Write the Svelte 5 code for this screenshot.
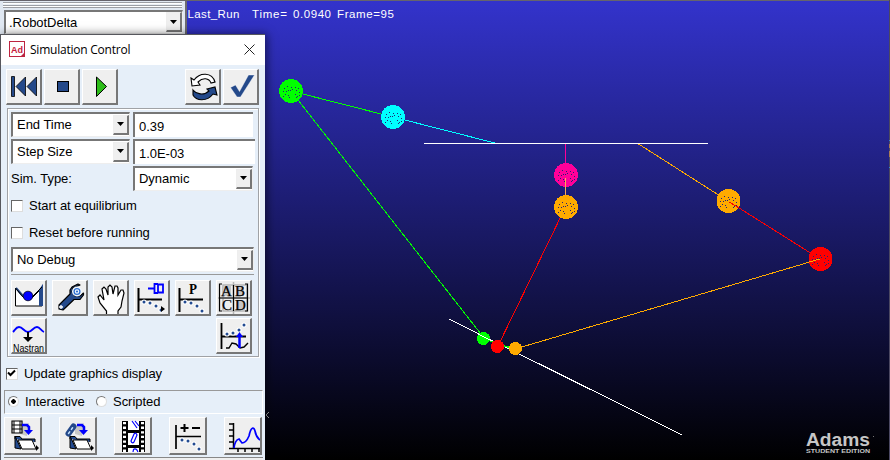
<script>
  const links = [
    ['#00ff00', 291, 91, 393, 117], ['#00ffff', 393, 117, 495, 143],
    ['#00ff00', 291, 91, 484, 338], ['#ff0099', 565.5, 143, 565.5, 175],
    ['#ffaa00', 637, 143, 728, 201], ['#ff0000', 565.5, 207, 498, 346],
    ['#ff0000', 728, 201, 820, 259], ['#ffaa00', 820, 259, 515, 349],
    ['#ffffff', 424, 143.5, 708, 143.5], ['#ffffff', 449, 319, 682, 435]
  ];
  const balls = [
    ['#00ff00', 291, 91], ['#00ffff', 393, 117], ['#ff0099', 566, 175],
    ['#ffaa00', 566, 207], ['#ffaa00', 728.5, 201], ['#ff0000', 820.5, 259]
  ];
  const specks = [[-7,-3],[-4,-5],[0,-4],[4,-4],[7,-3],[-8,0],[-5,0],[-3,-1],[-1,-1],[1,-2],[5,-1],[8,1],[-6,3],[-3,4],[4,3],[6,5],[8,4],[-8,5],[5,6],[-2,6]];
  const topTools = ['rewind', 'stop', 'play', 'gap', 'reset', 'check'];
  const midTools = ['equil', 'wrench', 'hand', 'linear', 'param', 'matrix'];
  const bottomTools = ['filmfolder', 'linkfolder', 'film', 'plusminus', 'plot'];
</script>

{#snippet axes(dots)}
  <path d="M4.500 8V32M4 19.500H28" stroke="#000" stroke-width="2" fill="none" />
  {#each dots as [x, y]}<circle cx={x} cy={y} r="2.600" fill="#fff" /><circle cx={x} cy={y} r="1.500" fill="#234b91" />{/each}
{/snippet}

{#snippet folder()}
  <path d="M10 21V18.500H15L17 21H30V24" fill="#234b91" stroke="#000" />
  <path d="M10 18V30L16 31Z" fill="#234b91" stroke="#000" />
  <path d="M13 22H27L31 31H17Z" fill="#fff" stroke="#000" />
  <path d="M31 27L34 30L31 33Z" fill="#000" />
{/snippet}

{#snippet icon(name)}
  <svg width="36" height="36" viewBox="0 0 36 36" aria-hidden="true">
    {#if name === 'rewind'}
      <path d="M4.500 7.500H7.500V27.500H4.500ZM18.500 8V27L9 17.500ZM29.500 8V27L20 17.500Z" fill="#24498a" stroke="#000" stroke-width=".8" />
    {:else if name === 'stop'}
      <rect x="12.500" y="12.500" width="11" height="10" fill="#24498a" stroke="#000" />
    {:else if name === 'play'}
      <path d="M13.500 8V27.500L23.500 17.500Z" fill="#2dbd19" stroke="#000" />
    {:else if name === 'reset'}
      <path d="M5 9L8 11C14 3 26 3 29 13L25 14C23 9 17 8 12 13L14 16L6 17Z" fill="#fff" stroke="#000" stroke-width="1.100" />
      <path d="M7 21C10 25 18 27 23 22L21 20L29 18L31 26L27 25C21 33 10 32 7 26Z" fill="#24498a" stroke="#000" stroke-width="1.100" />
    {:else if name === 'check'}
      <path d="M6.500 18.500L11.500 16L15.500 22.500L24.500 6H30.500L16.500 28H13Z" fill="#24498a" stroke="#fff" stroke-width=".4" />
    {:else if name === 'equil'}
      <path d="M4.500 8V26H31V8L22 17L17 20L12 17Z" fill="#fff" stroke="#000" />
      <path d="M5 8L12 16M29 10V26M29 10L31 7V26" stroke="#24498a" stroke-width="2" fill="none" />
      <path d="M4.500 8L12 17M31 7L21 17" stroke="#000" fill="none" />
      <circle cx="17" cy="16" r="4.800" fill="#0000ff" stroke="#000" stroke-width=".7" />
    {:else if name === 'wrench'}
      <path d="M18 14L7 25L7 29L11 30L22 19.500H28L31.500 15V13L28 16H23L20 12L21 8L28 5L26 4L20 7L18 10Z" fill="#24498a" stroke="#000" stroke-width="1.200" stroke-linejoin="round" />
      <circle cx="25" cy="11.500" r="5" fill="#eef7ff" /><circle cx="25" cy="11.500" r="2.900" fill="none" stroke="#2f6fd0" stroke-width="1.300" /><circle cx="25" cy="11.500" r="1.100" fill="#2f6fd0" />
      <path d="M9 25V29M7 27H11" stroke="#fff" stroke-width="1.300" />
    {:else if name === 'hand'}
      <path d="M13.500 34V31L7 23L5 17L7 15L11 20L9 9L11 7L13 9L15 15L15 7L17 5L19 7L20 14L22 6H24L25 8V15L28 10L30 10L31 13L29 21L28 27L25 31V34" fill="#fff" stroke="#000" stroke-width="1.200" />
    {:else if name === 'linear'}
      {@render axes([[10, 22], [16, 23], [22, 26], [27, 30]])}
      <path d="M14 8.500H20M24 4H20.500V13H24M24 4.500H29V12.500H24ZM24 4V13" fill="none" stroke="#0000ff" stroke-width="1.800" />
      <path d="M27 26L31 29L27 32Z" fill="#000" />
    {:else if name === 'param'}
      {@render axes([[10, 22], [16, 23], [22, 26], [27, 31]])}
      <text x="14" y="14" font-family="Liberation Serif, serif" font-size="14" font-weight="700" textLength="8" lengthAdjust="spacingAndGlyphs">P</text>
    {:else if name === 'matrix'}
      <path d="M7 5H31V31H7ZM17.500 2V34M2 18H34" fill="none" stroke="#b5b5b5" stroke-width="1.500" />
      <path d="M7 6H15V16H7ZM20 7H28V16H20ZM20 21H29V30H20Z" fill="#c6c6c6" />
      <path d="M6 4H3.500V31H6M29 4H31.500V31H29M17.500 5V31M4 18H31" fill="none" stroke="#000" stroke-width="1.200" />
      <g font-family="Liberation Serif, serif" font-size="15" stroke="#000" stroke-width=".25"><text x="5" y="15.500">A</text><text x="19" y="15.500">B</text><text x="6" y="30">C</text><text x="19" y="30">D</text></g>
    {:else if name === 'nastran'}
      <path d="M2 14C4 12 5 9 8 9C12 9 13 14 17 14C21 14 22 9 26 9C29 9 30 13 33 14" fill="none" stroke="#0000ff" stroke-width="1.800" />
      <path d="M17 14V20" stroke="#000" stroke-width="2" /><path d="M12 19H22L17 24Z" fill="#000" />
      <text x="2" y="34" font-family="Liberation Sans, sans-serif" font-size="10.500" textLength="31" lengthAdjust="spacingAndGlyphs">Nastran</text>
    {:else if name === 'deform'}
      <path d="M5.500 5V31M5 18.500H30" stroke="#000" stroke-width="1.800" />
      <path d="M10 30H13L16 25L20 26L24 30L28 29L32 25" fill="none" stroke="#000" stroke-width="1.400" />
      {#each [[11, 16], [17, 15], [23, 12], [28, 7]] as [x, y]}<circle cx={x} cy={y} r="2.600" fill="#fff" /><circle cx={x} cy={y} r="1.500" fill="#234b91" />{/each}
      <path d="M23.500 30V17" stroke="#0000ff" stroke-width="2.500" /><path d="M20 19L23.500 14L27 19Z" fill="#0000ff" />
    {:else if name === 'filmfolder'}
      <path d="M15 9L24 5L22 18L15 16Z" fill="#c7c7c7" />
      {@render folder()}
      <path d="M7 3H17V15H7Z" fill="#fff" stroke="#000" stroke-width="1.200" /><path d="M9 3V15M15 3V15M7 7H17M7 11H17" stroke="#000" />
      <path d="M17 7H22L24 9V13" fill="none" stroke="#0000ff" stroke-width="2.500" /><path d="M19 12H28L23.500 17Z" fill="#0000ff" />
    {:else if name === 'linkfolder'}
      <path d="M15 9L24 5L22 18L15 16Z" fill="#c7c7c7" />
      {@render folder()}
      <path d="M8.500 15.500L13.500 8.500" stroke="#24498a" stroke-width="6" stroke-linecap="round" /><path d="M8.500 15.500L13.500 8.500" stroke="#c5e2ff" stroke-width="1.500" stroke-linecap="round" stroke-dasharray="2 3" />
      <path d="M17 7H22L24 9V13" fill="none" stroke="#0000ff" stroke-width="2.500" /><path d="M19 12H28L23.500 17Z" fill="#0000ff" />
    {:else if name === 'film'}
      <path d="M7 3H30V34H7Z" fill="#000" /><path d="M13 3H24V12H13ZM13 15H24V27H13ZM13 30H24V34H13Z" fill="#fff" />
      <path d="M9.500 4V34M27.500 4V34" stroke="#fff" stroke-width="3" stroke-dasharray="2.300 2.300" />
      <path d="M17 3L22 10M20 3L24 8M16 23L19 16Q21 14 22 17L19 24Q17 26 16 23ZM18 34L18.500 31.500Q20 30 22 32L23 34" fill="none" stroke="#0000ff" stroke-width="1.200" />
    {:else if name === 'plusminus'}
      <path d="M6 7V31M6 18.500H31" stroke="#000" stroke-width="1.700" /><path d="M14.500 6V14M10.500 10H18.500M22 10H30" stroke="#000" stroke-width="2" />
      {#each [[12, 22], [18, 23], [24, 26], [29, 31]] as [x, y]}<circle cx={x} cy={y} r="2.600" fill="#fff" /><circle cx={x} cy={y} r="1.500" fill="#234b91" />{/each}
    {:else if name === 'plot'}
      <path d="M8.500 5V30.500H35M4 6H9M4 12H9M4 18H9M4 24H9M4 30.500H9M13 31V34M20 31V34M27 31V34M34 31V34" stroke="#000" stroke-width="1.500" fill="none" />
      <path d="M9 30Q10 22 14 21L17 25Q21 25 24 18C26 8 29 9 30 13Q31 19 35 22" stroke="#0000ff" stroke-width="1.700" fill="none" />
    {/if}
  </svg>
{/snippet}

{#snippet combo(label, kind)}
  <div class="combo {kind}"><span>{label}</span><button aria-label="Open {label}"><svg width="7" height="4" viewBox="0 0 7 4"><path d="M0 0H7L3.500 4Z" /></svg></button></div>
{/snippet}

<main>
  <svg class="scene" width="890" height="460" viewBox="0 0 890 460">
    <defs><linearGradient id="sky" x1="0" y1="0" x2="0" y2="1"><stop offset="0" stop-color="#3333cc" /><stop offset="1" stop-color="#000" /></linearGradient></defs>
    <rect width="890" height="460" fill="url(#sky)" />
    <g shape-rendering="crispEdges">
      {#each links as [c, x1, y1, x2, y2]}<line {x1} {y1} {x2} {y2} stroke={c} />{/each}
      {#each balls as [c, x, y]}
        <circle cx={x} cy={y} r="12" fill={c} />
        {#each specks as [dx, dy]}<rect x={Math.floor(x) + dx} y={y + dy} width="1" height="1" fill="#232173" />{/each}
      {/each}
      <line x1="565.500" y1="178" x2="565.500" y2="195" stroke="#ffaa55" />
      <path d="M729 202L741 209" stroke="#ff0000" /><path d="M809 262L820 259" stroke="#ffaa00" />
      <circle cx="483.500" cy="338.500" r="6.500" fill="#00ff00" /><path d="M478 334L494 342" stroke="#fff" />
      <path d="M490 341L513 349M502 345L512 348" stroke="#00ff00" />
      <circle cx="497.500" cy="346.500" r="6.500" fill="#ff0000" /><circle cx="515.500" cy="348.500" r="6.500" fill="#ffaa00" />
    </g>
    <g fill="#fff" font-family="Liberation Sans, sans-serif" font-size="11.500"><text x="187.500" y="18" textLength="52">Last_Run</text><text x="252" y="18" textLength="35">Time=</text><text x="293" y="18" textLength="38">0.0940</text><text x="337" y="18" textLength="57">Frame=95</text></g>
    <g fill="#c6c6c6"><text x="806" y="446" font-family="Liberation Sans, sans-serif" font-size="18" font-weight="700" textLength="64" lengthAdjust="spacingAndGlyphs">Adams</text><text x="806" y="453" font-family="Liberation Sans, sans-serif" font-size="5.500" font-weight="700" textLength="64" lengthAdjust="spacingAndGlyphs">STUDENT EDITION</text></g>
    <path d="M873.500 436V437" stroke="#777" /><path d="M269 412L266 415L269 418" fill="none" stroke="#aaa" />
    <path d="M0 .5H890" stroke="#66646c" /><path d="M889.500 0V460" stroke="#4b4861" />
    <path d="M889.500 144V148M889.500 151V157" stroke="#a87b57" /><path d="M889.500 140V141M889.500 167V168" stroke="#3785cc" />
  </svg>

  <header><div class="grip"></div>{@render combo('.RobotDelta', 'model')}</header>

  <section class="dialog">
    <div class="title">
      <svg width="16" height="16" viewBox="0 0 16 16"><rect x=".5" y=".5" width="15" height="15" fill="#fff" stroke="#bd2440" /><text x="2" y="12" fill="#c5203e" font-family="Liberation Sans, sans-serif" font-size="9" font-weight="700" textLength="12">Ad</text><path d="M15 12V15H12Z" fill="#bd2440" /></svg>
      <span>Simulation Control</span>
      <svg class="close" width="11" height="11" viewBox="0 0 11 11"><path d="M.5.5L10.500 10.500M10.500.5L.5 10.500" stroke="#222" /></svg>
    </div>
    <div class="top-tools">{#each topTools as name}{#if name === 'gap'}<i></i>{:else}<button aria-label={name}>{@render icon(name)}</button>{/if}{/each}</div>
    <div class="group">
      <div class="row">{@render combo('End Time', 'small')}<div class="field">0.39</div></div>
      <div class="row">{@render combo('Step Size', 'small')}<div class="field step">1.0E-03</div></div>
      <div class="row"><div class="caption">Sim. Type:</div>{@render combo('Dynamic', 'dynamic')}</div>
      <div class="row check"><i></i><span>Start at equilibrium</span></div>
      <div class="row check"><i></i><span>Reset before running</span></div>
      {@render combo('No Debug', 'wide')}
      <div class="rule"></div>
      <div class="mid-tools">{#each midTools as name}<button aria-label={name}>{@render icon(name)}</button>{/each}</div>
      <div class="mid-tools second"><button aria-label="Nastran">{@render icon('nastran')}</button><button aria-label="deform">{@render icon('deform')}</button></div>
    </div>
    <div class="update check"><i><svg width="9" height="9" viewBox="0 0 9 9"><path d="M1 3.500L3.500 6L8 1.500" fill="none" stroke="#000" stroke-width="2" /></svg></i><span>Update graphics display</span></div>
    <div class="modes"><b class="on"></b><span>Interactive</span><b></b><span>Scripted</span></div>
    <div class="bottom-tools">{#each bottomTools as name}<button aria-label={name}>{@render icon(name)}</button>{/each}</div>
    <div class="last"></div>
  </section>
</main>

<style>
  * { box-sizing: border-box; }
  main { position: relative; width: 890px; height: 460px; overflow: hidden; font: 13px "Liberation Sans", Arial, sans-serif; letter-spacing: -.03px; color: #000; }
  svg { display: block; flex: none; letter-spacing: 0; }
  .scene { position: absolute; inset: 0; }
  header { position: absolute; left: 0; top: 1px; width: 187px; height: 34px; padding: 1px 3px; background: #e0e8f2; border-right: 2px solid #6c6b70; }
  .grip { height: 6px; margin-bottom: 2px; border: solid #9b9ea4; border-width: 1px 0; background: linear-gradient(#fff 0 1px, #e8eef5 1px 2px, #9b9ea4 2px 3px, #fff 3px); }
  .dialog { position: absolute; left: 0; top: 34px; width: 265px; height: 426px; background: #e6eff9; border: 1px solid #56575d; border-right: 0; border-bottom: 0; box-shadow: 2px 0 9px #0008; overflow: hidden; }
  .title { display: flex; height: 30px; align-items: center; padding: 0 10px 2px 8px; background: #fff; font: 12px "Open Sans", sans-serif; }
  .title span { margin-left: 5px; width: 103px; white-space: nowrap; letter-spacing: -.23px; }
  .title .close { margin-left: auto; }
  button { display: block; flex: none; padding: 0; border: solid; border-width: 1px 2px 2px 1px; border-color: #fff #777 #777 #fff; background: #efefef; overflow: hidden; }
  button > svg { margin: -1px; }
  .top-tools { display: flex; gap: 2px; padding: 4px 0 0 5px; height: 43px; }
  .top-tools button { width: 36px; height: 36px; }
  .top-tools button > svg { margin-left: 0; }
  .top-tools i { width: 63px; }
  .group { width: 252px; height: 249px; margin-left: 6px; padding: 3px 0 0 3px; border: 1px solid #a0a2a6; box-shadow: 1px 1px #fff, inset 1px 1px #fff; }
  .row { display: flex; height: 27px; }
  .combo { display: flex; align-items: center; justify-content: space-between; height: 25px; border: 1px solid #eee; border-top: 2px solid #777; border-left: 2px solid #777; background: #fff; padding: 0 0 1px 4px; white-space: nowrap; }
  .combo button { width: 16px; height: 20px; border: 1px solid #eee; border-width: 1px 2px 2px 1px; border-color: #eee #777 #777 #eee; display: flex; align-items: center; justify-content: center; }
  .combo button svg { margin: 0; }
  .small { width: 119px; margin-right: 3px; }
  .dynamic { width: 120px; }
  .wide { width: 243px; }
  .model { width: 179px; margin-left: 1px; height: 24px; padding-left: 3px; }
  .field { width: 120px; height: 25px; border: solid #777; border-width: 2px 0 0 2px; background: #fff; padding: 5px 0 0 4px; line-height: 15px; }
  .step { width: 122px; }
  .caption { width: 122px; padding-top: 5px; line-height: 15px; }
  .check { display: flex; align-items: center; }
  .row.check { padding-bottom: 2px; }
  .check i { display: flex; width: 12px; height: 12px; margin-right: 6px; background: #fff; border: solid; border-width: 1.500px 1px 1px 1.500px; border-color: #666 #ddd #ddd #666; }
  .rule { width: 243px; height: 1px; margin-top: 2px; background: #999; }
  .mid-tools { display: flex; gap: 5px; padding-top: 5px; width: 241px; height: 38px; }
  .mid-tools button { width: 36px; height: 36px; }
  .second { padding-top: 5px; justify-content: space-between; }
  .update { height: 33px; padding-left: 5px; }
  .modes { display: flex; align-items: center; width: 259px; height: 24px; margin-left: 3px; padding: 0 0 1px 3px; border: solid; border-width: 1px; border-color: #999 #fff #fff #999; }
  .modes b { width: 11px; height: 11px; margin-right: 6px; border-radius: 50%; border: 1px solid; border-color: #777 #ddd #ddd #777; background: #fff; }
  .modes .on { background: radial-gradient(circle, #000 0 2px, #fff 2.500px); }
  .modes span { width: 71px; }
  .bottom-tools { display: flex; gap: 17px; margin: 3px 0 0 3px; }
  .bottom-tools button { width: 38px; height: 38px; }
  .bottom-tools button > svg { margin-left: 0; }
  .last { width: 259px; height: 5px; margin: 2px 0 0 3px; border-top: 1px solid #888; background: #efefef; }
</style>
